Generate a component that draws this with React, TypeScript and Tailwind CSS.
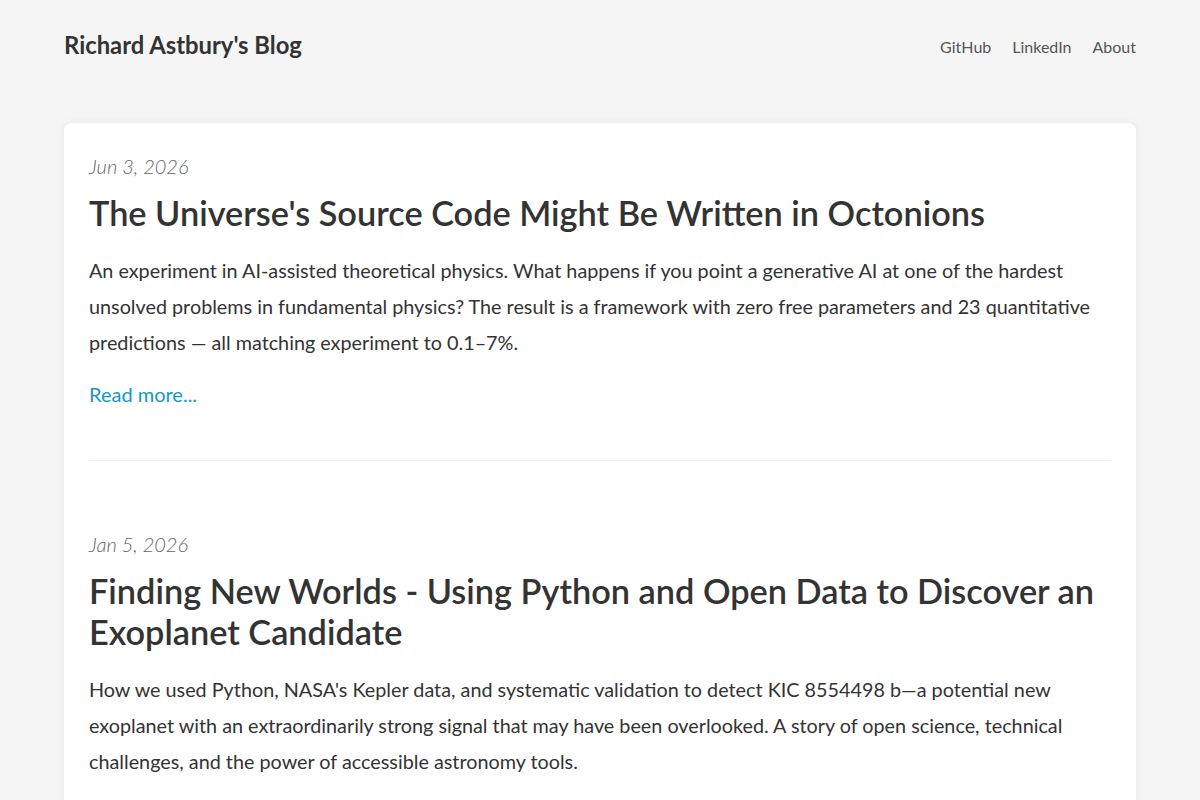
const posts = [
  {
    date: 'Jun 3, 2026',
    title: "The Universe's Source Code Might Be Written in Octonions",
    excerpt:
      'An experiment in AI-assisted theoretical physics. What happens if you point a generative AI at one of the hardest unsolved problems in fundamental physics? The result is a framework with zero free parameters and 23 quantitative predictions — all matching experiment to 0.1–7%.',
  },
  {
    date: 'Jan 5, 2026',
    title: 'Finding New Worlds - Using Python and Open Data to Discover an Exoplanet Candidate',
    excerpt:
      "How we used Python, NASA's Kepler data, and systematic validation to detect KIC 8554498 b—a potential new exoplanet with an extraordinarily strong signal that may have been overlooked. A story of open science, technical challenges, and the power of accessible astronomy tools.",
  },
];

function PostItem({ post, last }: { post: (typeof posts)[number]; last: boolean }) {
  return (
    <article className={last ? 'pt-[68px]' : 'pb-[51px] border-b border-[#f0f0f0]'}>
      <div className="text-[20px] leading-[30px] italic font-light text-[#666]">{post.date}</div>
      <h2 className="mt-[11px] text-[34.3px] leading-[41px] font-semibold text-[#333]">{post.title}</h2>
      <p className="mt-[19px] text-[19.8px] leading-[36px] text-[#333]">{post.excerpt}</p>
      <a href="#" className="mt-[19px] block text-[20px] leading-[30px] text-[#1597c6]">
        Read more...
      </a>
    </article>
  );
}

export default function App() {
  return (
    <div className="min-h-screen bg-[#f5f5f5] px-16" style={{ fontFamily: 'Lato, "Noto Sans", sans-serif' }}>
      <header className="flex items-center justify-between h-[90px]">
        <a href="#" className="pt-[2px] text-[23.8px] font-bold text-[#333]">
          Richard Astbury's Blog
        </a>
        <nav className="flex items-center gap-[21px] text-[16px] text-[#555] pt-[4px]">
          <a href="#">GitHub</a>
          <a href="#">LinkedIn</a>
          <a href="#">About</a>
        </nav>
      </header>
      <main className="mt-[33px] bg-white rounded-lg shadow-[0_0_8px_rgba(0,0,0,0.06)] px-[25px] pt-[28px] pb-[40px]">
        {posts.map((p, i) => (
          <PostItem key={p.date} post={p} last={i === posts.length - 1} />
        ))}
      </main>
    </div>
  );
}
